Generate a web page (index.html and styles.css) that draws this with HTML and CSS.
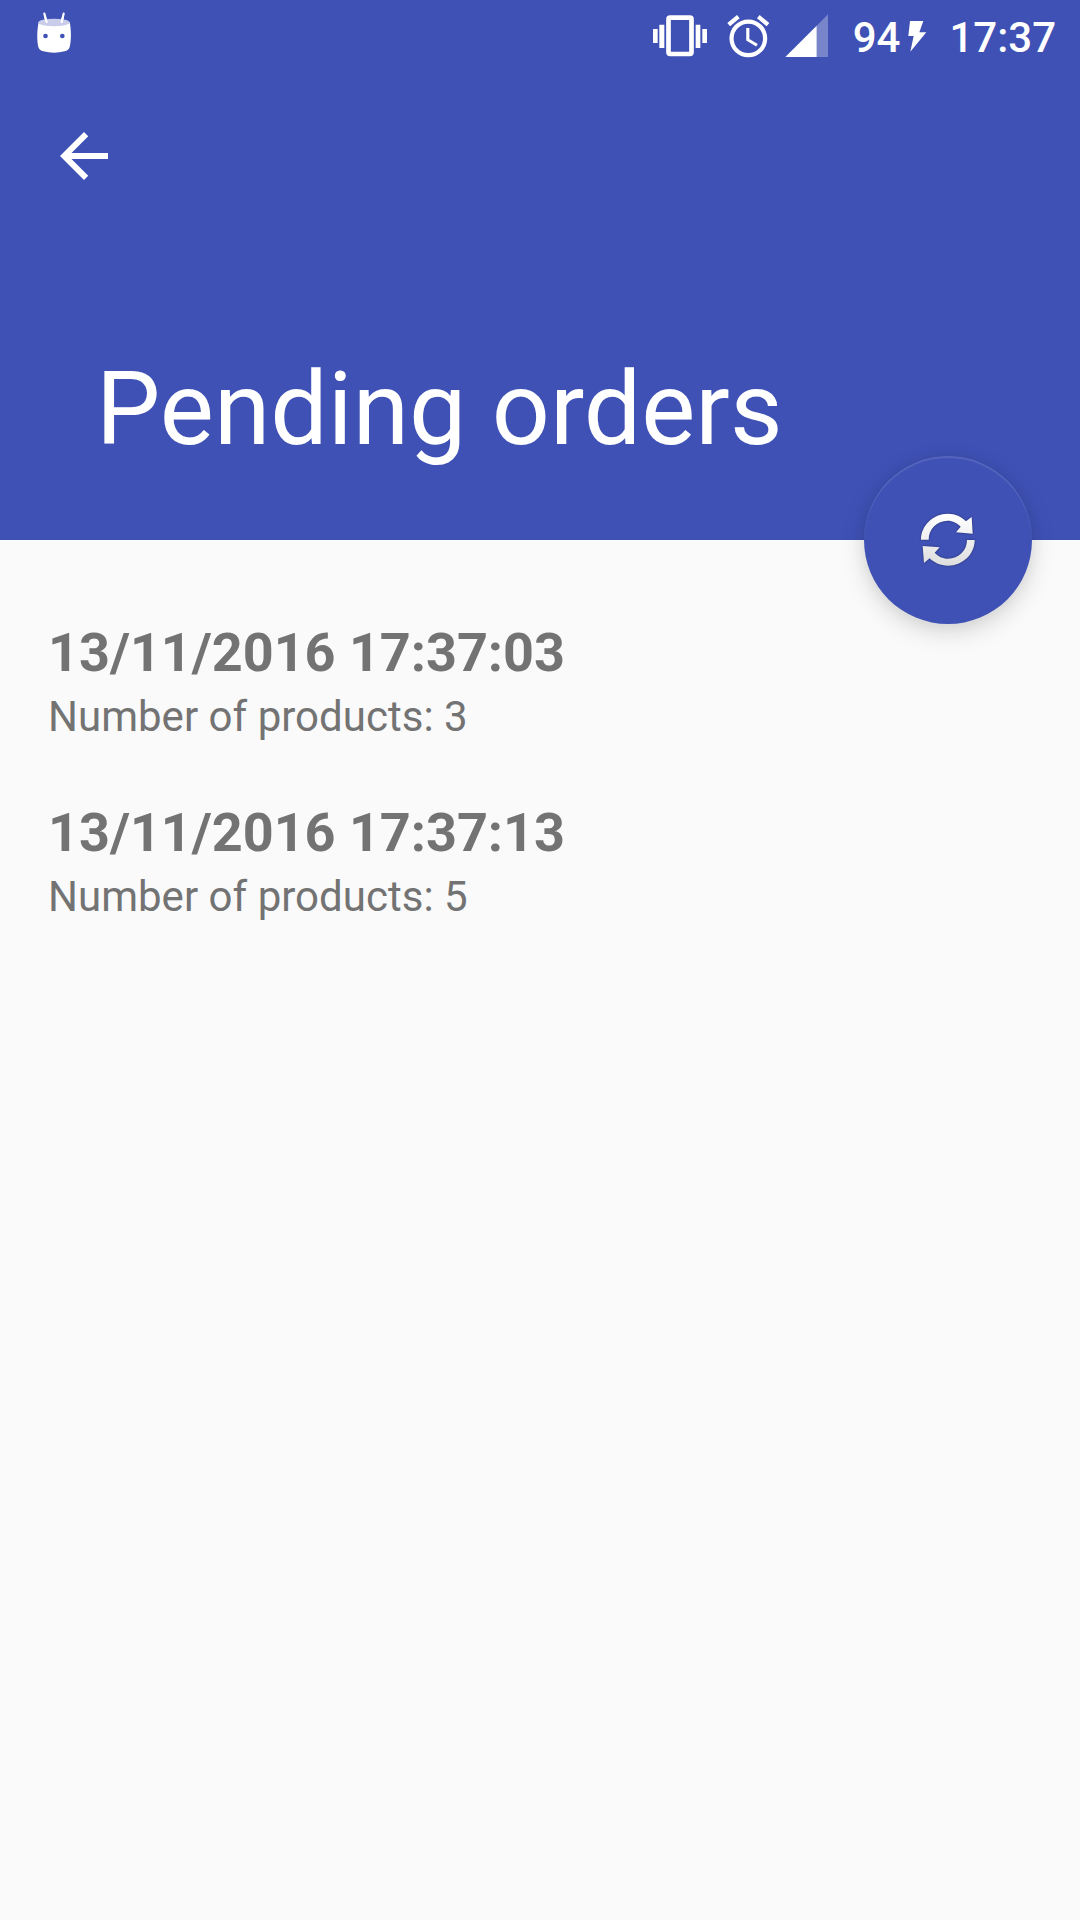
FILE: index.html
```html
<!DOCTYPE html>
<html lang="en">
<head>
<meta charset="utf-8">
<title>Pending orders</title>
<link rel="stylesheet" href="styles.css">
</head>
<body>
<header class="header">
  <div class="status">
    <svg class="status-android" viewBox="0 0 240 210">
      <path d="M73 41L80 66M131 41L125 66" stroke="#fff" stroke-width="6.5" stroke-linecap="round"/>
      <path d="M56 67C51 90 50 122 55 141Q58 151 70 154Q102 162 134 154Q146 151 149 141C154 122 154 90 149 67Z" fill="#fff"/>
      <ellipse cx="102" cy="67.500" rx="47" ry="11.500" fill="#c9cdea"/>
      <path d="M76 54L80 66M128 54L125 66" stroke="#fff" stroke-width="6.500" stroke-linecap="round"/>
      <circle cx="76.500" cy="108" r="7" fill="#3f51b5"/>
      <circle cx="127" cy="108" r="7" fill="#3f51b5"/>
    </svg>
    <svg class="status-vibrate" viewBox="36 0 168 216" fill="#fff">
      <path d="M39 87h14v42H39zM58 74h15v70H58zM167 74h14v70h-14zM187 87h14v42h-14z"/>
      <rect x="85.500" y="53" width="69" height="109" rx="5" fill="none" stroke="#fff" stroke-width="14"/>
    </svg>
    <svg class="status-alarm" viewBox="258 0 132 216">
      <path transform="translate(249.400 33.300) scale(6.300)" fill="#fff" d="M22 5.720l-4.600-3.860-1.290 1.530 4.600 3.860L22 5.720zM7.880 3.390L6.600 1.860 2 5.710l1.290 1.530 4.590-3.850zM12.500 8H11v6l4.750 2.850.75-1.230-4-2.370V8zM12 4a9 9 0 1 0 .01 18.010A9 9 0 0 0 12 4zm0 16a7 7 0 1 1 0-14 7 7 0 0 1 0 14z"/>
    </svg>
    <svg class="status-signal" viewBox="435 0 132 216" fill="#fff">
      <path d="M530 77L564 43V171H530Z" fill-opacity=".3"/>
      <path d="M436 171L530 77V171Z"/>
    </svg>
    <span class="status-battery">94</span>
    <svg class="status-bolt" viewBox="195 0 72 216">
      <path d="M210 63H250L238 97H259L211 155L221 108H205Z" fill="#fff"/>
    </svg>
    <time class="status-time">17:37</time>
  </div>
  <nav class="toolbar">
    <svg class="back" viewBox="0 0 270 270">
      <path transform="translate(24 30) scale(9)" fill="#fff" d="M20 11H7.830l5.590-5.590L12 4l-8 8 8 8 1.410-1.410L7.830 13H20v-2z"/>
    </svg>
  </nav>
  <h1 class="title">Pending orders</h1>
  <button class="fab" aria-label="Refresh">
    <svg class="fab-icon" viewBox="9 0 270 240">
      <defs>
        <linearGradient id="silver" gradientUnits="userSpaceOnUse" x1="0" y1="40" x2="0" y2="197">
          <stop offset="0" stop-color="#fff"/>
          <stop offset="1" stop-color="#dedede"/>
        </linearGradient>
      </defs>
      <path fill="url(#silver)" d="M63 119C63 76 100 41 143 41C166 41 185 50 198 64L215 51L218 101L168 97L182 80C172 69 158 62 143 62C111 62 86 87 86 119Z"/>
      <path fill="url(#silver)" d="M224 120C224 163 188 197 144 197C122 197 103 189 89 175L72 189L68 138L119 142L104 158C114 169 128 176 144 176C176 176 201 152 201 120Z"/>
    </svg>
  </button>
</header>
<main class="orders">
  <article class="order">
    <h2 class="order-date">13/11/2016 17:37:03</h2>
    <p class="order-count">Number of products: 3</p>
  </article>
  <article class="order">
    <h2 class="order-date">13/11/2016 17:37:13</h2>
    <p class="order-count">Number of products: 5</p>
  </article>
</main>
</body>
</html>
```
FILE: styles.css
```css
* {
  box-sizing: border-box;
  margin: 0;
  padding: 0;
}

body {
  min-height: 1920px;
  background: #fafafa;
  color: #737373;
  font-family: Roboto, sans-serif;
}

svg {
  display: block;
  flex: none;
}

.header {
  position: relative;
  display: flex;
  flex-direction: column;
  height: 540px;
  padding-bottom: 71px;
  background: #3f51b5;
  color: #fff;
}

.status {
  display: flex;
  align-items: flex-start;
  height: 72px;
  padding: 0 24px 0 20px;
  font-size: 42px;
  font-weight: 500;
  line-height: 75px;
}

.status-android {
  width: 80px;
  height: 70px;
  margin-right: auto;
}

.status-vibrate {
  width: 56px;
  height: 72px;
  margin-right: 18px;
}

.status-alarm {
  width: 44px;
  height: 72px;
  margin-right: 15px;
}

.status-signal {
  width: 44px;
  height: 72px;
  margin-right: 24px;
}

.status-bolt {
  width: 24px;
  height: 72px;
  margin-left: 5px;
}

.status-time {
  margin-left: 20px;
}

.toolbar {
  padding: 38px 40px 0;
}

.back {
  width: 90px;
  height: 90px;
}

.title {
  margin-top: auto;
  padding-left: 96px;
  font-size: 102px;
  font-weight: 400;
  letter-spacing: 0.05px;
  line-height: 120px;
}

.fab {
  position: absolute;
  right: 48px;
  bottom: -84px;
  display: flex;
  align-items: center;
  justify-content: center;
  width: 168px;
  height: 168px;
  border: 0;
  border-radius: 50%;
  background: #3f51b5;
  box-shadow:
    inset 0 2px 1px rgba(255, 255, 255, 0.12),
    0 8px 24px rgba(0, 0, 0, 0.15),
    0 0 14px rgba(0, 0, 0, 0.05);
}

.fab-icon {
  width: 90px;
  height: 80px;
  filter: blur(0.5px) drop-shadow(0 0 1px rgba(0, 0, 0, 0.4));
}

.orders {
  display: flex;
  flex-direction: column;
  padding-top: 55px;
}

.order {
  padding: 26px 48px;
}

.order-date {
  font-size: 54px;
  font-weight: 700;
  letter-spacing: -0.04px;
  line-height: 64px;
}

.order-count {
  font-size: 42px;
  letter-spacing: 0.02px;
  line-height: 64px;
}
```
